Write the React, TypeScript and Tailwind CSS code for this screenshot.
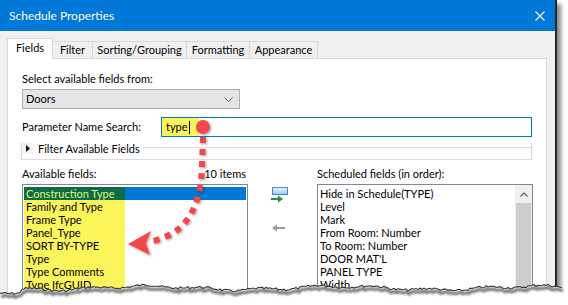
import React from "react";

const availableFields = [
    "Construction Type",
    "Family and Type",
    "Frame Type",
    "Panel_Type",
    "SORT BY-TYPE",
    "Type",
    "Type Comments",
    "Type IfcGUID",
];

const scheduledFields = [
    "Hide in Schedule(TYPE)",
    "Level",
    "Mark",
    "From Room: Number",
    "To Room: Number",
    "DOOR MAT'L",
    "PANEL TYPE",
    "Width",
    "Height",
];

// jagged "torn paper" line along the bottom of the capture
function tornPoints() {
    let seed = 7;
    const rand = () => {
        seed = (seed * 9301 + 49297) % 233280;
        return seed / 233280;
    };
    const pts: [number, number][] = [];
    for (let x = 0; x <= 562; x += 2) {
        const y =
            10 +
            (x < 22 ? 4 : 0) +
            1.8 * Math.sin(x / 31) +
            1.2 * Math.sin(x / 9 + 1) +
            (rand() - 0.5) * 2.4;
        pts.push([x, y]);
    }
    return pts;
}

function TornEdge() {
    const pts = tornPoints();
    const line = pts.map((p) => `${p[0]},${p[1].toFixed(1)}`).join(" ");
    const shadow = pts
        .map((p) => `${p[0] + 1},${(p[1] + 3).toFixed(1)}`)
        .join(" ");
    return (
        <svg
            className="pointer-events-none absolute top-[278px] left-0"
            width="568"
            height="27"
            viewBox="0 0 568 27"
        >
            <defs>
                <filter id="tornBlur" x="-5%" y="-50%" width="110%" height="200%">
                    <feGaussianBlur stdDeviation="1.3" />
                </filter>
            </defs>
            <polygon points={`0,${pts[0][1]} ${line} 568,12 568,27 0,27`} fill="#ffffff" />
            <polyline
                points={shadow}
                fill="none"
                stroke="rgba(0,0,0,0.55)"
                strokeWidth="3"
                filter="url(#tornBlur)"
            />
            <polyline points={line} fill="none" stroke="#3a3a3a" strokeWidth="1.1" />
        </svg>
    );
}

function Callout() {
    return (
        <svg
            className="pointer-events-none absolute top-0 left-0"
            width="568"
            height="305"
            viewBox="0 0 568 305"
        >
            <defs>
                <filter id="redShadow" x="-20%" y="-20%" width="140%" height="140%">
                    <feDropShadow dx="1.2" dy="1.2" stdDeviation="1" floodColor="#000" floodOpacity="0.35" />
                </filter>
            </defs>
            <g filter="url(#redShadow)">
                <path
                    d="M203,137 L202,166 C201,205 188,233 153,241"
                    fill="none"
                    stroke="#f2464c"
                    strokeWidth="6"
                    strokeDasharray="6 6"
                />
                <polygon points="128,244 151,231 146,243 150,255" fill="#f2464c" />
                <circle cx="203" cy="127" r="7" fill="#f2464c" />
            </g>
        </svg>
    );
}

function AddIcon() {
    return (
        <svg width="18" height="16" viewBox="0 0 18 16">
            <defs>
                <linearGradient id="addGrad" x1="0" y1="0" x2="0" y2="1">
                    <stop offset="0" stopColor="#f2f8ff" />
                    <stop offset="1" stopColor="#9cc6f0" />
                </linearGradient>
            </defs>
            <rect x="1.5" y="0.5" width="15" height="7" fill="url(#addGrad)" stroke="#3d86d8" />
            <path d="M0,12 H8" stroke="#2f8a3f" strokeWidth="2.2" />
            <polygon points="7,8.5 12,12 7,15.5" fill="#2f8a3f" />
        </svg>
    );
}

function RemoveIcon() {
    return (
        <svg width="14" height="8" viewBox="0 0 14 8">
            <path d="M4,4 H13" stroke="#9c9c9c" strokeWidth="2" />
            <polygon points="0,4 5,0.5 5,7.5" fill="#9c9c9c" />
        </svg>
    );
}

export default function App() {
    return (
        <div className="relative h-[305px] w-[568px] overflow-hidden bg-white font-['Lato','Liberation_Sans',sans-serif] text-[11px] text-black">
            <div className="flex h-[330px] w-[557px] flex-col border-r-2 border-r-[#262626] shadow-[4px_4px_4px_rgba(0,0,0,0.45)]">
                {/* title bar */}
                <div className="flex h-[31px] shrink-0 items-center justify-between bg-[#0078d7] pr-[10px] pl-[9px] text-[12px] text-white">
                    <span>Schedule Properties</span>
                    <svg width="10" height="10" viewBox="0 0 10 10">
                        <path d="M0.5,0.5 L9.5,9.5 M9.5,0.5 L0.5,9.5" stroke="#ffffff" strokeWidth="1.1" />
                    </svg>
                </div>

                <div className="flex flex-1 flex-col bg-[#f0f0f0] pt-[7px] pr-[8px] pl-[7px]">
                    {/* tabs */}
                    <div className="relative z-10 -mb-px flex h-[21px] items-end">
                        <div className="flex h-[21px] w-[46px] items-center justify-center border border-b-0 border-[#d9d9d9] bg-white pb-[2px]">
                            Fields
                        </div>
                        <div className="flex h-[18px] w-[40px] items-center justify-center border-t border-r border-[#d9d9d9]">
                            Filter
                        </div>
                        <div className="flex h-[18px] w-[94px] items-center justify-center border-t border-r border-[#d9d9d9]">
                            Sorting/Grouping
                        </div>
                        <div className="flex h-[18px] w-[63px] items-center justify-center border-t border-r border-[#d9d9d9]">
                            Formatting
                        </div>
                        <div className="flex h-[18px] w-[68px] items-center justify-center border-t border-r border-[#d9d9d9]">
                            Appearance
                        </div>
                    </div>

                    {/* tab page */}
                    <div className="flex-1 border border-[#d9d9d9] bg-white pt-[12px] pl-[14px]">
                        <div className="h-[15px] leading-[15px]">Select available fields from:</div>
                        <div className="mt-[3px] flex h-[20px] w-[218px] items-center justify-between border border-[#adadad] bg-[#e5e5e5] pr-[6px] pl-[3px]">
                            <span>Doors</span>
                            <svg width="9" height="5" viewBox="0 0 9 5">
                                <path d="M0.5,0.5 L4.5,4.5 L8.5,0.5" fill="none" stroke="#5a5a5a" strokeWidth="1" />
                            </svg>
                        </div>

                        <div className="mt-[8px] flex h-[20px] items-center">
                            <span className="w-[139px]">Parameter Name Search:</span>
                            <div className="flex h-[20px] w-[371px] border border-[#0078d7]">
                                <div className="flex h-full w-[37px] items-center bg-[#fbf55b] pl-[4px]">
                                    <span>type</span>
                                    <span className="ml-px h-[13px] w-px bg-black" />
                                </div>
                            </div>
                        </div>

                        {/* collapsible filter group */}
                        <div className="mt-[10px] -ml-px h-[17px] w-[511px] border-x border-b border-[#dcdcdc]">
                            <div className="-mt-[4px] flex h-[11px] items-center">
                                <div className="flex h-[11px] w-[12px] items-center justify-center bg-[#f4f4f4]">
                                    <svg width="4" height="7" viewBox="0 0 4 7">
                                        <polygon points="0,0 4,3.5 0,7" fill="#111" />
                                    </svg>
                                </div>
                                <span className="ml-[4px] leading-[11px]">Filter Available Fields</span>
                                <div className="mt-[4px] ml-[3px] flex-1 self-start border-t border-[#dcdcdc]" />
                            </div>
                        </div>

                        {/* field lists */}
                        <div className="mt-[6px] grid grid-cols-[226px_69px_216px]">
                            <div className="flex h-[15px] justify-between pr-[2px] leading-[15px]">
                                <span>Available fields:</span>
                                <span>10 items</span>
                            </div>
                            <div />
                            <div className="h-[15px] leading-[15px]">Scheduled fields (in order):</div>

                            <div className="mt-[3px] h-[125px] border border-[#828790] px-px pt-[2px]">
                                {availableFields.map((f, i) => (
                                    <div
                                        key={f}
                                        className={`flex h-[13px] leading-[13px] ${i === 0 ? "bg-[#0078d7]" : ""}`}
                                    >
                                        <div
                                            className={`w-[101px] shrink-0 pl-[2px] whitespace-nowrap ${
                                                i === 0 ? "bg-[#0d6c46] text-[#e2f37c]" : "bg-[#fbf55b]"
                                            }`}
                                        >
                                            {f}
                                        </div>
                                    </div>
                                ))}
                            </div>

                            <div className="mt-[3px] flex flex-col gap-[21px] pt-[3px] pl-[23px]">
                                <AddIcon />
                                <div className="pl-px">
                                    <RemoveIcon />
                                </div>
                            </div>

                            <div className="mt-[3px] flex h-[125px] border border-[#828790]">
                                <div className="flex-1 pt-[2px] pl-[2px]">
                                    {scheduledFields.map((f) => (
                                        <div key={f} className="h-[13px] leading-[13px] whitespace-nowrap">
                                            {f}
                                        </div>
                                    ))}
                                </div>
                                <div className="flex w-[17px] flex-col bg-[#f0f0f0]">
                                    <div className="flex h-[18px] items-center justify-center">
                                        <svg width="8" height="5" viewBox="0 0 8 5">
                                            <path d="M0.5,4.5 L4,1 L7.5,4.5" fill="none" stroke="#606060" strokeWidth="1.2" />
                                        </svg>
                                    </div>
                                    <div className="mx-px flex-1 bg-[#cdcdcd]" />
                                </div>
                            </div>
                        </div>
                    </div>
                </div>
            </div>

            <Callout />
            <TornEdge />
        </div>
    );
}
